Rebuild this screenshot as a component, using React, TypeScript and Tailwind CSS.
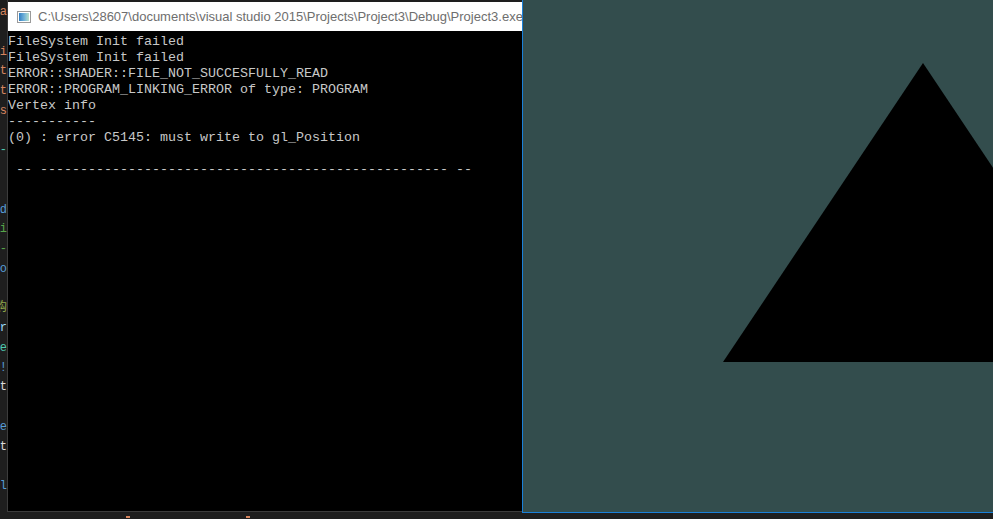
const codeLines: { text: string; color: string }[] = [
  { text: 'la', color: 'text-[#d7855f]' },
  { text: '', color: '' },
  { text: 'ci', color: 'text-[#d7855f]' },
  { text: 'st', color: 'text-[#d7855f]' },
  { text: 'st', color: 'text-[#d7855f]' },
  { text: 'os', color: 'text-[#d7855f]' },
  { text: '', color: '' },
  { text: '-', color: 'text-[#4ec9b0]' },
  { text: '', color: '' },
  { text: '', color: '' },
  { text: 'd', color: 'text-[#569cd6]' },
  { text: 'ci', color: 'text-[#57a64a]' },
  { text: '--', color: 'text-[#57a64a]' },
  { text: 'co', color: 'text-[#569cd6]' },
  { text: '', color: '' },
  { text: '购', color: 'text-[#8fa84a]' },
  { text: 'ir', color: 'text-[#9cdcfe]' },
  { text: 're', color: 'text-[#4ec9b0]' },
  { text: '(!', color: 'text-[#569cd6]' },
  { text: 't', color: 'text-[#dcdcdc]' },
  { text: '', color: '' },
  { text: 'e', color: 'text-[#569cd6]' },
  { text: 't', color: 'text-[#dcdcdc]' },
  { text: '', color: '' },
  { text: 'el', color: 'text-[#569cd6]' },
]

const consoleLines = [
  'FileSystem Init failed',
  'FileSystem Init failed',
  'ERROR::SHADER::FILE_NOT_SUCCESFULLY_READ',
  'ERROR::PROGRAM_LINKING_ERROR of type: PROGRAM',
  'Vertex info',
  '-----------',
  '(0) : error C5145: must write to gl_Position',
  '',
  ' -- ' + '-'.repeat(51) + ' --',
]

function CodeStrip() {
  return (
    <div className="w-[7px] shrink-0 overflow-hidden pt-[3px] font-['Liberation_Mono','Noto_Sans_CJK_SC',monospace] text-[12px] leading-[19.75px]">
      {codeLines.map((l, i) => (
        <div key={i} className={`flex justify-end whitespace-nowrap h-[19.75px] ${l.color}`}>
          {l.text}
        </div>
      ))}
    </div>
  )
}

function ConsoleWindow() {
  return (
    <div className="w-[515px] shrink-0 h-[512px] flex flex-col border-l border-b border-[#3c3c3c] overflow-hidden">
      <div className="mt-[2px] h-[29px] bg-white flex items-center pl-[9px] gap-[7px] whitespace-nowrap">
        <div className="w-[14px] h-[12px] border border-[#9a9a9a] bg-white p-[1px] shrink-0">
          <div className="w-full h-full bg-gradient-to-r from-[#2f7fc4] via-[#6fb0d8] to-[#b9e0c9]" />
        </div>
        <span className="font-['Liberation_Sans','Noto_Sans',sans-serif] text-[13px] text-[#6e6e6e]">
          C:\Users\28607\documents\visual studio 2015\Projects\Project3\Debug\Project3.exe
        </span>
      </div>
      <div className="flex-1 bg-black pt-[3px] font-['Liberation_Mono','DejaVu_Sans_Mono',monospace] text-[13.33px] leading-[16px] text-[#c8c8c8]">
        {consoleLines.map((line, i) => (
          <div key={i} className="h-[16px] whitespace-pre">
            {line}
          </div>
        ))}
      </div>
    </div>
  )
}

function GLWindow() {
  return (
    <div className="w-[471px] shrink-0 h-[513px] border-l border-b border-[#1a80d8] bg-[#334d4d] overflow-hidden">
      <svg width="470" height="512" className="block">
        <polygon points="400,63 200,362 600,362" fill="#000" />
      </svg>
    </div>
  )
}

export default function App() {
  return (
    <div className="relative w-[993px] h-[519px] bg-[#1e1e1e] flex overflow-hidden">
      <CodeStrip />
      <ConsoleWindow />
      <GLWindow />
      <div className="absolute left-[126px] top-[516px] w-[4px] h-[2px] bg-[#d7855f]" />
      <div className="absolute left-[246px] top-[516px] w-[4px] h-[2px] bg-[#d7855f]" />
    </div>
  )
}
